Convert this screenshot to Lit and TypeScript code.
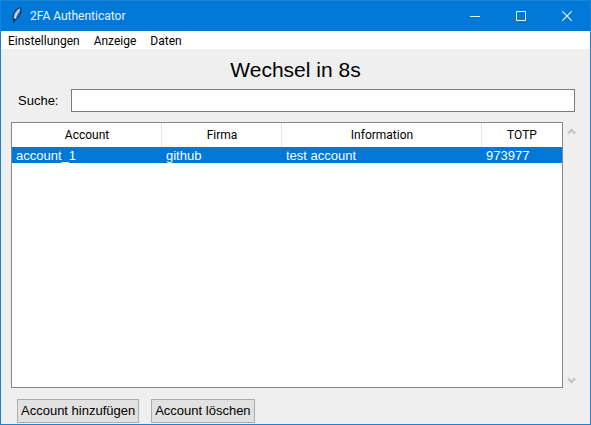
import { LitElement, html, css, svg } from "lit";
import { customElement, property, state } from "lit/decorators.js";

interface Account {
  account: string;
  firma: string;
  information: string;
  totp: string;
}

@customElement("title-bar")
class TitleBar extends LitElement {
  @property() caption = "";

  static styles = css`
    :host {
      display: flex;
      align-items: stretch;
      height: 30px;
      color: #e8f5ff;
      background: #0078d7;
      font: 12px/30px Roboto, "Open Sans", sans-serif;
    }
    .feather {
      width: 16px;
      height: 20px;
      margin: 5px 5px 0 8px;
    }
    .caption {
      flex: 1;
      font: inherit;
      margin: 0;
    }
    button {
      width: 46px;
      padding: 0;
      border: 0;
      background: none;
      color: inherit;
      display: grid;
      place-items: center;
    }
    button:hover {
      background: #1a86db;
    }
  `;

  private control(label: string, shape: unknown) {
    return html`<button aria-label=${label}>
      <svg width="10" height="10" viewBox="0 0 10 10" fill="none" stroke="currentColor">${shape}</svg>
    </button>`;
  }

  render() {
    return html`
      <svg class="feather" viewBox="0 0 16 20" aria-hidden="true">
        <path d="M4.6 13.6 4 11 4.8 7.4 7.2 4 10.2 1.9 11.8 2.4 11.8 6 10.6 9.2 8.6 12 6.4 13.6Z" fill="#79aee6" stroke="#06122e" stroke-width=".9" />
        <path d="M10.8 5 10.6 8 8.8 10.8 6.8 12.6Z" fill="#1c4a8a" />
        <path d="M10.3 3.2 7.6 7.6 5.4 12.6" fill="none" stroke="#eef7ff" stroke-width="1" />
        <path d="M5.4 12.6 4.6 16.6" fill="none" stroke="#06122e" stroke-width="1.2" />
      </svg>
      <h1 class="caption">${this.caption}</h1>
      ${this.control("Minimieren", svg`<path d="M0 5.5H10" />`)}
      ${this.control("Maximieren", svg`<path d="M.5 .5h9v9h-9z" />`)}
      ${this.control("Schließen", svg`<path d="M.3 .3 9.7 9.7M9.7 .3 .3 9.7" stroke-width="1.2" />`)}
    `;
  }
}

@customElement("menu-bar")
class MenuBar extends LitElement {
  @property({ attribute: false }) items: string[] = [];

  static styles = css`
    :host {
      display: flex;
      background: #fff;
    }
    button {
      padding: 2px 7px 0;
      border: 0;
      background: none;
      color: #000;
      font: 12px/16px Roboto, "Open Sans", sans-serif;
    }
    button:hover {
      background: #e5f3ff;
    }
  `;

  render() {
    return this.items.map((item) => html`<button>${item}</button>`);
  }
}

@customElement("account-table")
class AccountTable extends LitElement {
  @property({ attribute: false }) rows: Account[] = [];
  @state() private selected = 0;

  static styles = css`
    :host {
      display: flex;
      min-height: 0;
    }
    .frame {
      flex: 1;
      border: 1px solid #828790;
      background: #fff;
      overflow: hidden;
    }
    table {
      width: 100%;
      table-layout: fixed;
      border-collapse: collapse;
    }
    .wide {
      width: 200px;
    }
    .large {
      width: 150px;
    }
    .medium {
      width: 120px;
    }
    .small {
      width: 80px;
    }
    th {
      height: 24px;
      padding: 0;
      box-shadow: inset -1px 0 #e5e5e5;
      font: 12px/24px Roboto, "Open Sans", sans-serif;
    }
    th:last-child {
      box-shadow: none;
    }
    td {
      padding: 2px 4px 0;
      font: 13px/14px "Liberation Sans", Arial, sans-serif;
      white-space: nowrap;
    }
    .selected {
      background: #0078d7;
      color: #fff;
    }
    .scroll {
      width: 17px;
      padding-top: 1px;
      display: flex;
      flex-direction: column;
      justify-content: space-between;
    }
    .scroll button {
      height: 16px;
      padding: 0;
      border: 0;
      background: none;
      color: #bfbfbf;
      display: grid;
      place-items: center;
    }
  `;

  private arrow(label: string, d: string) {
    return html`<button aria-label=${label} disabled>
      <svg width="9" height="7" viewBox="0 0 9 7" fill="none" stroke="currentColor" stroke-width="2">
        <path d=${d} />
      </svg>
    </button>`;
  }

  render() {
    return html`
      <div class="frame">
        <table>
          <colgroup>
            <col class="large" />
            <col class="medium" />
            <col class="wide" />
            <col class="small" />
          </colgroup>
          <thead>
            <tr>
              <th>Account</th>
              <th>Firma</th>
              <th>Information</th>
              <th>TOTP</th>
            </tr>
          </thead>
          <tbody>
            ${this.rows.map(
              (row, i) => html`<tr class=${i === this.selected ? "selected" : ""} @click=${() => (this.selected = i)}>
                <td>${row.account}</td>
                <td>${row.firma}</td>
                <td>${row.information}</td>
                <td>${row.totp}</td>
              </tr>`
            )}
          </tbody>
        </table>
      </div>
      <div class="scroll">
        ${this.arrow("Nach oben", "M1 5.5 4.5 2 8 5.5")} ${this.arrow("Nach unten", "M1 1.5 4.5 5 8 1.5")}
      </div>
    `;
  }
}

@customElement("app-root")
class AppRoot extends LitElement {
  @state() private seconds = 8;
  @state() private accounts: Account[] = [
    { account: "account_1", firma: "github", information: "test account", totp: "973977" },
  ];

  static styles = css`
    :host {
      display: flex;
      flex-direction: column;
      box-sizing: border-box;
      min-height: 100vh;
      border: 1px solid #1883d7;
      background: #efefef;
      color: #000;
      font: 13px/16px "Liberation Sans", Arial, sans-serif;
    }
    main {
      flex: 1;
      display: flex;
      flex-direction: column;
      padding: 0 10px 1px;
    }
    .countdown {
      margin: 7px 0 5px;
      font: 21px/28px "Liberation Sans", Arial, sans-serif;
      text-align: center;
    }
    .search {
      display: flex;
      align-items: center;
      gap: 13px;
      margin: 0 5px 10px 7px;
    }
    .search input {
      flex: 1;
      min-width: 0;
      box-sizing: border-box;
      height: 23px;
      padding: 0 4px;
      border: 1px solid #7a7a7a;
      background: #fff;
      font: inherit;
      outline: none;
    }
    account-table {
      flex: 1;
    }
    .actions {
      display: flex;
      gap: 12px;
      margin: 11px 6px 0;
    }
    .actions button {
      height: 24px;
      padding: 0 3px;
      border: 1px solid #adadad;
      background: #e1e1e1;
      color: #000;
      font: inherit;
    }
  `;

  render() {
    return html`
      <title-bar caption="2FA Authenticator"></title-bar>
      <menu-bar .items=${["Einstellungen", "Anzeige", "Daten"]}></menu-bar>
      <main>
        <h2 class="countdown">Wechsel in ${this.seconds}s</h2>
        <div class="search">
          <label for="query">Suche:</label>
          <input id="query" type="text" />
        </div>
        <account-table .rows=${this.accounts}></account-table>
        <div class="actions">
          <button>Account hinzufügen</button>
          <button>Account löschen</button>
        </div>
      </main>
    `;
  }
}
